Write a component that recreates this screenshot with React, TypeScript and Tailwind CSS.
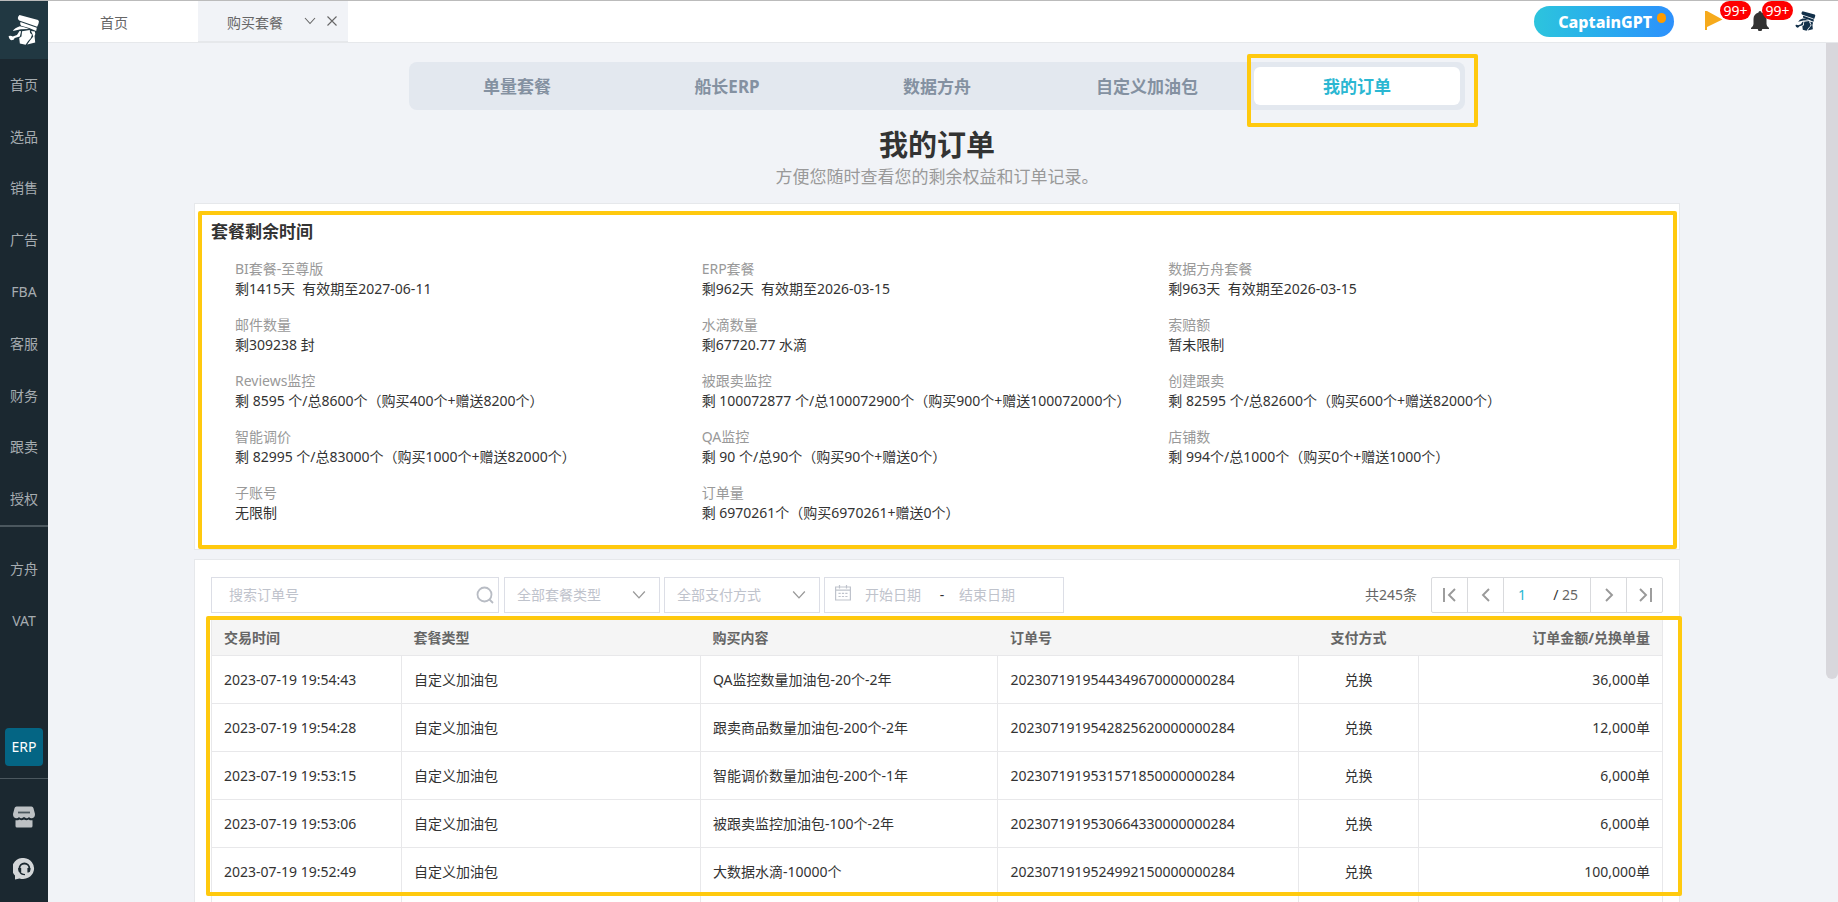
import React from "react";

const navItems = ["首页", "选品", "销售", "广告", "FBA", "客服", "财务", "跟卖", "授权"];
const planTabs = ["单量套餐", "船长ERP", "数据方舟", "自定义加油包", "我的订单"];

const quotas: [string, string][] = [
  ["BI套餐-至尊版", "剩1415天  有效期至2027-06-11"],
  ["ERP套餐", "剩962天  有效期至2026-03-15"],
  ["数据方舟套餐", "剩963天  有效期至2026-03-15"],
  ["邮件数量", "剩309238 封"],
  ["水滴数量", "剩67720.77 水滴"],
  ["索赔额", "暂未限制"],
  ["Reviews监控", "剩 8595 个/总8600个（购买400个+赠送8200个）"],
  ["被跟卖监控", "剩 100072877 个/总100072900个（购买900个+赠送100072000个）"],
  ["创建跟卖", "剩 82595 个/总82600个（购买600个+赠送82000个）"],
  ["智能调价", "剩 82995 个/总83000个（购买1000个+赠送82000个）"],
  ["QA监控", "剩 90 个/总90个（购买90个+赠送0个）"],
  ["店铺数", "剩 994个/总1000个（购买0个+赠送1000个）"],
  ["子账号", "无限制"],
  ["订单量", "剩 6970261个（购买6970261+赠送0个）"],
];

const orders = [
  ["2023-07-19 19:54:43", "自定义加油包", "QA监控数量加油包-20个-2年", "2023071919544349670000000284", "兑换", "36,000单"],
  ["2023-07-19 19:54:28", "自定义加油包", "跟卖商品数量加油包-200个-2年", "2023071919542825620000000284", "兑换", "12,000单"],
  ["2023-07-19 19:53:15", "自定义加油包", "智能调价数量加油包-200个-1年", "2023071919531571850000000284", "兑换", "6,000单"],
  ["2023-07-19 19:53:06", "自定义加油包", "被跟卖监控加油包-100个-2年", "2023071919530664330000000284", "兑换", "6,000单"],
  ["2023-07-19 19:52:49", "自定义加油包", "大数据水滴-10000个", "2023071919524992150000000284", "兑换", "100,000单"],
  ["", "", "", "", "", ""],
];

function CaptainLogo({ className }: { className: string }) {
  return (
    <svg viewBox="22 40 100 96" className={className} fill="currentColor" aria-hidden="true">
      <path d="M58 41 L116 57 Q121 61 117 69 L113 78 L100 73 L57 58 Q48 51 58 41Z" />
      <path d="M61 63 L112 81 L110 91 L88 82 L63 75 Q58 70 61 63Z" />
      <path d="M59 76 Q72 77 88 85 L62 86 L37 91 Q43 81 59 76Z" />
      <path d="M24 107 Q31 104 37 108 L50 104 L58 91 L63 92 L59 108 L43 113 Q41 120 33 120 Q25 118 24 107Z" />
      <path d="M66 92 L90 88 L91 97 L97 103 L93 114 L85 122 L77 134 L59 130 L57 113 L64 108Z" />
      <path d="M94 91 L106 93 Q109 101 105 107 L107 127 L82 133 L92 119 L101 108 L98 100Z" />
    </svg>
  );
}

function Chevron({ className }: { className: string }) {
  return (
    <svg viewBox="0 0 12 8" className={className} fill="none" stroke="currentColor" strokeWidth="1.1" aria-hidden="true">
      <path d="M1 1 L6 6.5 L11 1" />
    </svg>
  );
}

function PageIcon({ d }: { d: string }) {
  return (
    <svg viewBox="0 0 16 16" className="h-4 w-4" fill="none" stroke="currentColor" strokeWidth="1.9" aria-hidden="true">
      <path d={d} />
    </svg>
  );
}

function Highlight({ className }: { className: string }) {
  return <div className={`pointer-events-none absolute rounded-xs border-4 border-[#ffc90e] ${className}`} />;
}

function Sidebar() {
  return (
    <nav className="flex w-12 shrink-0 flex-col bg-[#1b2830] text-[#a6acb0]">
      <a href="#home" aria-label="Captain" className="flex h-[58px] shrink-0 items-center justify-center bg-[#213842] text-white">
        <CaptainLogo className="h-8 w-8" />
      </a>
      <div className="flex h-[468px] flex-col border-b-2 border-[#4b575e]">
        {navItems.map((n) => (
          <a key={n} href="#nav" className="flex flex-1 items-center justify-center">{n}</a>
        ))}
      </div>
      <div className="mt-4 flex flex-col">
        <a href="#ark" className="flex h-[52px] items-center justify-center">方舟</a>
        <a href="#vat" className="flex h-[52px] items-center justify-center">VAT</a>
      </div>
      <div className="mt-auto flex flex-col items-center">
        <button className="h-[38px] w-[38px] rounded bg-[#046584] text-white">ERP</button>
        <div className="mt-3 h-px w-full bg-[#4b575e]" />
        <button aria-label="店铺" className="mt-3 flex h-[52px] w-full items-center justify-center text-[#bdc1c4]">
          <svg viewBox="0 0 22 22" className="h-[22px] w-[22px]" fill="currentColor">
            <path d="M3.5 .5 H18.5 Q20 .5 20.4 2 L22 8 Q22 12 19 12.2 Q17 12.4 16 11 Q14.6 12.8 12.8 12 L11 11 L9.2 12 Q7.4 12.8 6 11 Q5 12.4 3 12.2 Q0 12 0 8 L1.6 2 Q2 .5 3.5 .5Z" />
            <rect x="5" y="5.6" width="12" height="1.8" fill="#4b575e" />
            <path d="M2.5 14.2 Q5 14.6 6.3 13.4 Q8.5 15 11 13.4 Q13.5 15 15.7 13.4 Q17 14.6 19.5 14.2 V20 Q19.5 21.5 18 21.5 H4 Q2.5 21.5 2.5 20Z" />
          </svg>
        </button>
        <button aria-label="客服" className="mb-[7px] flex h-[52px] w-full items-center justify-center text-[#d3d6d8]">
          <svg viewBox="0 0 22 22" className="h-[22px] w-[22px]">
            <path fill="currentColor" d="M11 0 A11 10.5 0 1 1 6.5 20.4 L2 21.5 V17.5 A11 10.5 0 0 1 11 0Z" />
            <path fill="none" stroke="#1b2830" strokeWidth="1.8" d="M6.4 11.5 V10.5 A5 5 0 0 1 16.4 10.5 V11.5" />
            <path fill="#1b2830" d="M5.2 10 H8.2 V14.5 H7.2 Q5.2 14 5.2 12Z M14.4 10 H17.4 V12 Q17.4 14 15.4 14.5 H14.4Z" />
            <path fill="none" stroke="#1b2830" strokeWidth="1.4" d="M7 14 Q8 16.6 12 16.6" />
          </svg>
        </button>
      </div>
    </nav>
  );
}

function Badge({ className }: { className: string }) {
  return (
    <span className={`absolute -top-[10px] flex h-[19px] w-[31px] items-center justify-center rounded-full bg-[#fe0000] text-white ${className}`}>
      99+
    </span>
  );
}

function TopBar() {
  return (
    <header className="flex h-[42px] shrink-0 items-stretch border-b border-[#e6e8eb] bg-white text-[#666]">
      <a href="#home" className="flex w-[150px] items-center pt-1 pb-[2px] pl-[52px]">首页</a>
      <div className="flex w-[150px] items-center border-b border-[#e6e8eb] bg-[#f1f3f7] pl-[29px]">
        <span className="pt-1 pb-px">购买套餐</span>
        <button aria-label="展开" className="ml-[21px]"><Chevron className="h-2 w-3" /></button>
        <button aria-label="关闭" className="ml-[11px]">
          <svg viewBox="0 0 10 10" className="h-[10px] w-[10px]" fill="none" stroke="currentColor" strokeWidth="1.1"><path d="M.5 .5 L9.5 9.5 M9.5 .5 L.5 9.5" /></svg>
        </button>
      </div>
      <div className="ml-auto flex items-start pr-[22px]">
        <button className="relative mt-[5px] h-[31px] w-[140px] rounded-full bg-linear-to-r from-[#2dc4dd] to-[#2d90fc] pr-[22px] text-right text-base font-extrabold text-white">
          CaptainGPT
          <span className="absolute top-[7px] right-2 h-[10px] w-[9px] rounded-full bg-[#ff9b00]" />
        </button>
        <button aria-label="旗标" className="relative mt-[10px] ml-[31px]">
          <svg viewBox="0 0 18 20" className="h-5 w-[18px]" fill="#f6aa1c"><path d="M0 0 H2 L17.5 8.5 L2 16 V19 H0Z" /></svg>
          <Badge className="left-[15px]" />
        </button>
        <button aria-label="通知" className="relative mt-[10px] ml-7">
          <svg viewBox="0 0 18 20" className="h-5 w-[18px]" fill="#333"><path d="M9 0 Q10.500 0 10.500 1.500 Q15.500 3 15.500 8 V13 Q15.500 15.500 18 17 V18 H11.200 Q11 20.400 9 20.400 Q7 20.400 6.800 18 H0 V17 Q2.500 15.500 2.500 13 V8 Q2.500 3 7.500 1.500 Q7.500 0 9 0Z" /></svg>
          <Badge className="left-[11px]" />
        </button>
        <button aria-label="账号" className="mt-[9px] ml-[26px] text-[#12304a]">
          <CaptainLogo className="h-[22px] w-[21px]" />
        </button>
      </div>
    </header>
  );
}

function QuotaCard() {
  return (
    <section className="relative mt-[14px] border border-[#e6e8eb] bg-white px-4 pt-4 pb-[26px]">
      <h2 className="text-[17px] leading-6 font-bold text-[#333]">套餐剩余时间</h2>
      <dl className="mt-[15px] grid grid-cols-3 gap-y-4 pr-7 pl-6">
        {quotas.map(([k, v]) => (
          <div key={k} className="leading-5">
            <dt className="text-[#999]">{k}</dt>
            <dd className="whitespace-pre text-[#333]">{v}</dd>
          </div>
        ))}
      </dl>
      <Highlight className="top-[7px] right-[2px] bottom-0 left-[3px]" />
    </section>
  );
}

function FilterSelect({ label }: { label: string }) {
  return (
    <div className="relative flex items-center">
      <select aria-label={label} className="h-9 w-[156px] appearance-none border border-[#dcdee6] bg-white pl-3 text-[#bfc3cc]">
        <option>{label}</option>
      </select>
      <Chevron className="pointer-events-none absolute right-[14px] h-[10px] w-[14px] text-[#999]" />
    </div>
  );
}

function Toolbar() {
  const pageBtn = "flex h-full w-9 items-center justify-center border-r border-[#d9dadd] text-[#999]";
  return (
    <div className="flex items-center">
      <div className="flex h-9 w-72 items-center border border-[#dcdee6] pr-1 pl-[17px]">
        <input aria-label="搜索订单号" placeholder="搜索订单号" className="min-w-0 flex-1 outline-none placeholder:text-[#bfc3cc]" />
        <button aria-label="搜索" className="text-[#b8bcc4]">
          <svg viewBox="0 0 18 18" className="h-[18px] w-[18px]" fill="none" stroke="currentColor" strokeWidth="1.8"><circle cx="8.5" cy="8.5" r="7" /><path d="M13.5 13.5 L17 17" /></svg>
        </button>
      </div>
      <div className="ml-[5px] flex gap-1">
        <FilterSelect label="全部套餐类型" />
        <FilterSelect label="全部支付方式" />
        <div className="flex h-9 w-60 items-center border border-[#dcdee6] pl-[10px]">
          <svg viewBox="0 0 16 16" className="mb-1 h-4 w-4 shrink-0 text-[#bfc3cc]" fill="none" stroke="currentColor" strokeWidth="1.2">
            <path d="M.6 2 H15.4 V15 H.6Z M.6 5.2 H15.4 M4.5 0 V3.5 M11.5 0 V3.5" />
            <path strokeDasharray="2.2 1.2" d="M3.5 8.3 H13 M3.5 11.5 H13" />
          </svg>
          <input aria-label="开始日期" placeholder="开始日期" className="ml-[14px] w-[60px] outline-none placeholder:text-[#bfc3cc]" />
          <span className="w-[34px] text-center text-[#333]">-</span>
          <input aria-label="结束日期" placeholder="结束日期" className="w-[60px] outline-none placeholder:text-[#bfc3cc]" />
        </div>
      </div>
      <span className="ml-auto text-[#666]">共245条</span>
      <div className="ml-[14px] flex h-9 rounded-xs border border-[#d9dadd] text-[#666]">
        <button aria-label="第一页" className={pageBtn}><PageIcon d="M2 1 V15 M13 2 L7 8 L13 14" /></button>
        <button aria-label="上一页" className={pageBtn}><PageIcon d="M11 2 L5 8 L11 14" /></button>
        <div className="flex w-[87px] items-center border-r border-[#d9dadd]">
          <input aria-label="页码" defaultValue="1" className="w-9 text-center text-[#2ab7d2] outline-none" />
          <span className="ml-auto pr-3"><span className="text-[#333]">/</span> 25</span>
        </div>
        <button aria-label="下一页" className={pageBtn}><PageIcon d="M5 2 L11 8 L5 14" /></button>
        <button aria-label="最后一页" className="flex w-[35px] items-center justify-center text-[#999]"><PageIcon d="M3 2 L9 8 L3 14 M14 1 V15" /></button>
      </div>
    </div>
  );
}

function OrdersTable() {
  const align = ["text-left", "text-left", "text-left", "text-left", "text-center", "text-right"];
  const heads = ["交易时间", "套餐类型", "购买内容", "订单号", "支付方式", "订单金额/兑换单量"];
  return (
    <table className="mt-[6px] w-full table-fixed border-collapse border border-[#e8e8ea] text-[#333]">
      <colgroup>
        <col className="w-[13.1%]" />
        <col className="w-[20.6%]" />
        <col className="w-[20.5%]" />
        <col className="w-[20.7%]" />
        <col className="w-[8.3%]" />
        <col />
      </colgroup>
      <thead>
        <tr className="h-9 bg-[#f5f5f5] text-[#666]">
          {heads.map((h, i) => (
            <th key={h} className={`px-3 font-bold ${align[i]}`}>{h}</th>
          ))}
        </tr>
      </thead>
      <tbody>
        {orders.map((row, r) => (
          <tr key={r} className="h-12">
            {row.map((c, i) => (
              <td key={i} className={`border border-[#e8e8ea] px-3 ${align[i]}`}>{c}</td>
            ))}
          </tr>
        ))}
      </tbody>
    </table>
  );
}

export default function App() {
  return (
    <div className="flex h-screen overflow-hidden border-t border-[#bbb] bg-[#f1f3f7] font-['Noto_Sans','Noto_Sans_CJK_SC',sans-serif] text-sm">
      <Sidebar />
      <div className="flex min-w-0 flex-1 flex-col">
        <TopBar />
        <div className="flex min-h-0 flex-1">
          <main className="min-w-0 flex-1 overflow-hidden px-6 pt-[19px]">
            <div className="mx-auto w-full max-w-[1486px]">
              <div className="relative mx-auto flex h-12 max-w-[1056px] gap-1 rounded-lg bg-[#e3e8ef] p-[5px]">
                {planTabs.map((t) => (
                  <button
                    key={t}
                    className={`flex-1 rounded-md pt-[2px] text-[17px] font-bold ${t === "我的订单" ? "bg-white text-[#2ab7d2]" : "text-[#8491a1]"}`}
                  >
                    {t}
                  </button>
                ))}
                <Highlight className="-top-2 -right-[13px] -bottom-[17px] w-[231px]" />
              </div>
              <h1 className="mt-[17px] text-center text-[29px] leading-9 font-bold text-[#333]">我的订单</h1>
              <p className="mt-[2px] text-center text-[17px] leading-6 text-[#999]">方便您随时查看您的剩余权益和订单记录。</p>
              <QuotaCard />
              <section className="relative mt-[9px] border border-[#e6e8eb] bg-white px-4 pt-[17px] pb-6">
                <Toolbar />
                <OrdersTable />
                <Highlight className="top-[56px] -right-[3px] left-[11px] h-[280px]" />
              </section>
            </div>
          </main>
          <div className="w-3 shrink-0">
            <div className="h-[74%] rounded-b-full bg-[#d8d7dc]" />
          </div>
        </div>
      </div>
    </div>
  );
}
